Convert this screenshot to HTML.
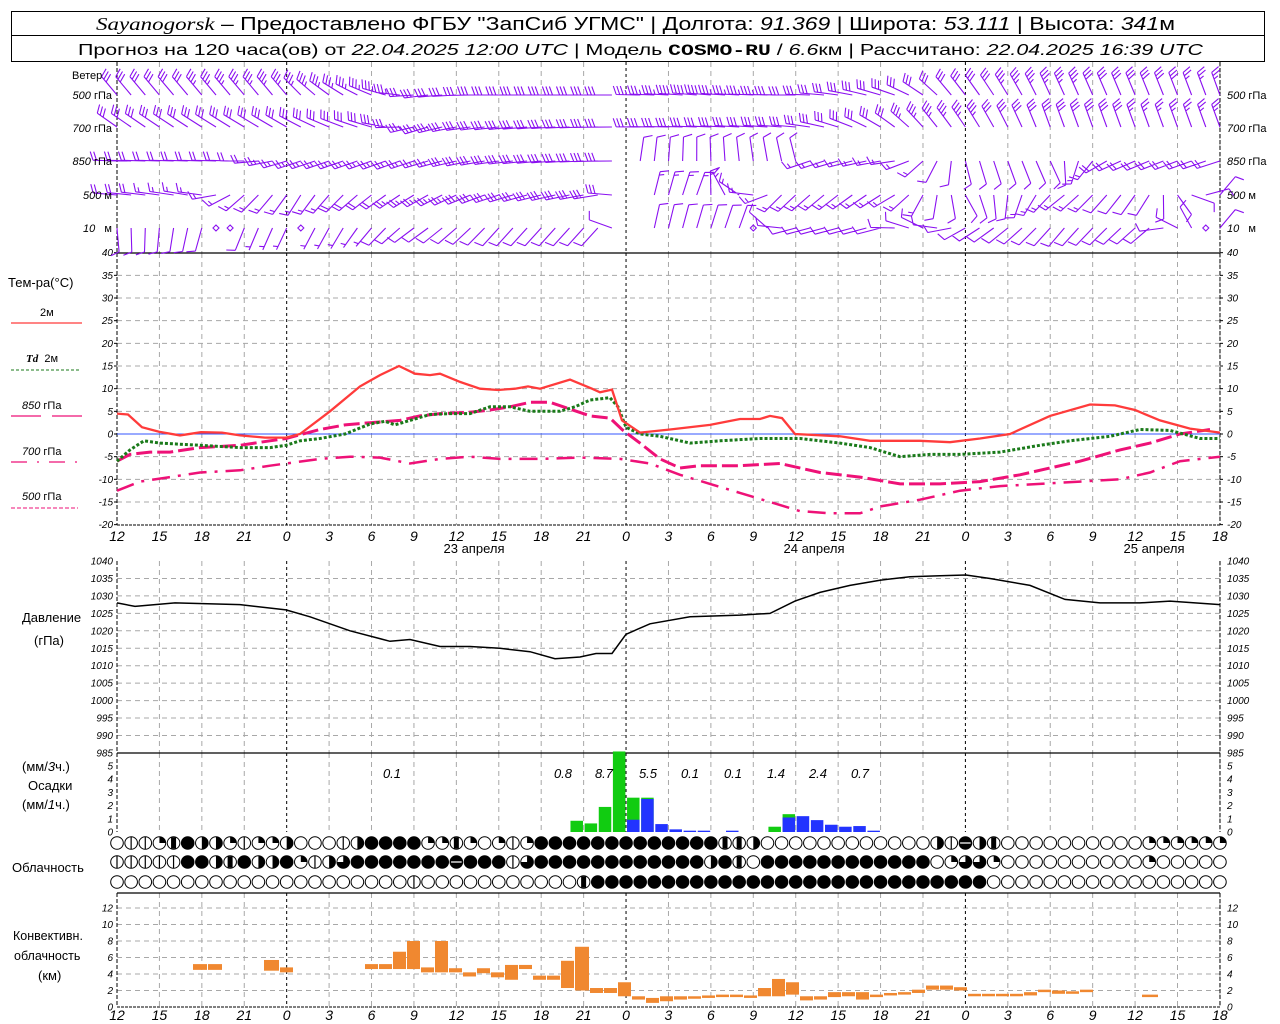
<!DOCTYPE html>
<html><head><meta charset="utf-8">
<style>
html,body{margin:0;padding:0;background:#fff;}
svg{display:block;font-family:"Liberation Sans","DejaVu Sans",sans-serif;}
.t{font-size:11px;fill:#000;}
.n{font-size:10px;font-style:italic;fill:#000;}
</style></head>
<body>
<svg id="s" width="1280" height="1024" viewBox="0 0 1280 1024" xmlns="http://www.w3.org/2000/svg">
<rect x="0" y="0" width="1280" height="1024" fill="#fff"/>
<rect x="11.5" y="11.5" width="1253" height="24" fill="none" stroke="#000"/>
<rect x="11.5" y="35.5" width="1253" height="26" fill="none" stroke="#000"/>
<text x="96" y="30" font-size="18" textLength="1079" lengthAdjust="spacingAndGlyphs"><tspan font-family="Liberation Serif" font-style="italic">Sayanogorsk</tspan> – Предоставлено ФГБУ "ЗапСиб УГМС" | Долгота: <tspan font-style="italic">91.369</tspan> | Широта: <tspan font-style="italic">53.111</tspan> | Высота: <tspan font-style="italic">341</tspan>м</text>
<text x="78" y="55" font-size="16" textLength="1125" lengthAdjust="spacingAndGlyphs">Прогноз на 120 часа(ов) от <tspan font-style="italic">22.04.2025 12:00 UTC</tspan> | Модель <tspan font-family="Liberation Mono" font-weight="bold">COSMO-RU</tspan> / <tspan font-style="italic">6.6</tspan>км | Рассчитано: <tspan font-style="italic">22.04.2025 16:39 UTC</tspan></text>
<g id="g"></g>
<!-- left labels -->
<text class="t" x="72" y="79">Ветер</text>
<text class="t" x="112" y="99" text-anchor="end"><tspan font-style="italic">500</tspan> гПа</text>
<text class="t" x="112" y="132" text-anchor="end"><tspan font-style="italic">700</tspan> гПа</text>
<text class="t" x="112" y="165" text-anchor="end"><tspan font-style="italic">850</tspan> гПа</text>
<text class="t" x="112" y="199" text-anchor="end"><tspan font-style="italic">500</tspan> м</text>
<text class="t" x="112" y="232" text-anchor="end"><tspan font-style="italic">10</tspan>&#160;&#160;&#160;м</text>
<text class="t" x="1227" y="99"><tspan font-style="italic">500</tspan> гПа</text>
<text class="t" x="1227" y="132"><tspan font-style="italic">700</tspan> гПа</text>
<text class="t" x="1227" y="165"><tspan font-style="italic">850</tspan> гПа</text>
<text class="t" x="1227" y="199"><tspan font-style="italic">500</tspan> м</text>
<text class="t" x="1227" y="232"><tspan font-style="italic">10</tspan>&#160;&#160;&#160;м</text>

<text x="8" y="287" font-size="13">Тем-ра(°C)</text>
<text class="t" x="40" y="316">2м</text>
<line x1="11" y1="323" x2="82" y2="323" stroke="#ff3b3b" stroke-width="1.2"/>
<text class="t" x="26" y="362"><tspan font-style="italic" font-weight="bold" font-family="Liberation Serif">Td</tspan>&#160;&#160;2м</text>
<line x1="11" y1="370" x2="79" y2="370" stroke="#1a7a1a" stroke-width="1" stroke-dasharray="3,2"/>
<text class="t" x="22" y="409"><tspan font-style="italic">850</tspan> гПа</text>
<line x1="11" y1="416" x2="82" y2="416" stroke="#ee1177" stroke-width="1.2" stroke-dasharray="30,11"/>
<text class="t" x="22" y="455"><tspan font-style="italic">700</tspan> гПа</text>
<line x1="11" y1="462" x2="78" y2="462" stroke="#ee1177" stroke-width="1.2" stroke-dasharray="16,10,2,10"/>
<text class="t" x="22" y="500"><tspan font-style="italic">500</tspan> гПа</text>
<line x1="11" y1="508" x2="78" y2="508" stroke="#ee1177" stroke-width="1" stroke-dasharray="4,2"/>

<text x="22" y="622" font-size="13">Давление</text>
<text x="34" y="645" font-size="13">(гПа)</text>
<text x="22" y="771" font-size="13">(мм/<tspan font-style="italic">3</tspan>ч.)</text>
<text x="28" y="790" font-size="13">Осадки</text>
<text x="22" y="809" font-size="13">(мм/<tspan font-style="italic">1</tspan>ч.)</text>
<text x="12" y="872" font-size="13">Облачность</text>
<text x="13" y="940" font-size="12.5">Конвективн.</text>
<text x="14" y="960" font-size="12.5">облачность</text>
<text x="38" y="980" font-size="13">(км)</text>
</svg>
<script>
(function(){
var NS="http://www.w3.org/2000/svg";
var g=document.getElementById("g");
function el(tag,attrs,txt){var e=document.createElementNS(NS,tag);for(var k in attrs)e.setAttribute(k,attrs[k]);if(txt!=null)e.textContent=txt;g.appendChild(e);return e;}
function X(h){return 117+h*14.14;}
var L=117,R=1220;
// horizontal grids
function hgrid(y){el("line",{x1:L,y1:y,x2:R,y2:y,stroke:"#a8a8a8","stroke-dasharray":"5,4","stroke-width":1});}
function TY(t){return 434-t*4.533;}
function PY(p){return 561+(1040-p)*3.49;}
function RY(v){return 832-v*13.2;}
function KY(k){return 1007-k*8.25;}
for(var t=35;t>=-15;t-=5){hgrid(TY(t));}
for(var p=1035;p>=990;p-=5){hgrid(PY(p));}
for(var k=2;k<=12;k+=2){hgrid(KY(k));}
// vertical grid
var segs=[[62,253],[253,525],[561,753],[753,832],[893,1007]];
for(var i=0;i<=26;i++){var x=X(3*i);var day=((3*i-12)%24===0);
 if(i===0)continue;
 segs.forEach(function(s){el("line",{x1:x,y1:s[0],x2:x,y2:s[1],stroke:day?"#000":"#a8a8a8","stroke-dasharray":day?"3,3":"5,4","stroke-width":1});});}
// axes
[[L,253,L,525],[R,253,R,525],[L,561,L,832],[R,561,R,832],[L,893,L,1007],[R,893,R,1007],[L,62,L,253],[R,62,R,253]].forEach(function(a){el("line",{x1:a[0],y1:a[1],x2:a[2],y2:a[3],stroke:"#000","stroke-width":1,"stroke-dasharray":"4,2"});});
[253,753,893].forEach(function(y){el("line",{x1:L,y1:y,x2:R,y2:y,stroke:"#000","stroke-width":1.3});});
[525,1007].forEach(function(y){el("line",{x1:L,y1:y,x2:R,y2:y,stroke:"#000","stroke-width":1,"stroke-dasharray":"3,1"});});
// axis labels
function lab(x,y,s,anchor){el("text",{x:x,y:y+3.5,"class":"n","text-anchor":anchor},s);}
for(var t=40;t>=-20;t-=5){lab(113,TY(t),""+t,"end");lab(1227,TY(t),""+t,"start");el("line",{x1:L-3,y1:TY(t),x2:L,y2:TY(t),stroke:"#000"});el("line",{x1:R,y1:TY(t),x2:R+3,y2:TY(t),stroke:"#000"});}
for(var p=1040;p>=985;p-=5){lab(113,PY(p),""+p,"end");lab(1227,PY(p),""+p,"start");}
for(var v=0;v<=5;v++){lab(113,RY(v),""+v,"end");lab(1227,RY(v),""+v,"start");}
for(var k=0;k<=12;k+=2){lab(113,KY(k),""+k,"end");lab(1227,KY(k),""+k,"start");}
// hour labels
for(var i=0;i<=26;i++){var s=""+((12+3*i)%24);
 el("text",{x:X(3*i),y:541,"text-anchor":"middle","font-size":14,"font-style":"italic"},s);
 el("text",{x:X(3*i),y:1020,"text-anchor":"middle","font-size":14,"font-style":"italic"},s);}
el("text",{x:474,y:553,"text-anchor":"middle","font-size":13},"23  апреля");
el("text",{x:814,y:553,"text-anchor":"middle","font-size":13},"24  апреля");
el("text",{x:1154,y:553,"text-anchor":"middle","font-size":13},"25  апреля");
// zero line
el("line",{x1:L,y1:TY(0),x2:R,y2:TY(0),stroke:"#3355ff","stroke-width":1});
function poly(pts,fy,attrs){var d=pts.map(function(p,i){return (i?"L":"M")+p[0]+","+fy(p[1]).toFixed(1);}).join("");attrs.d=d;attrs.fill="none";el("path",attrs);}
var T2=[[117,4.5],[128,4.3],[142,1.5],[159,0.5],[180,-0.3],[201,0.4],[222,0.3],[240,-0.3],[265,-0.8],[286,-0.8],[300,0],[330,5],[360,10.5],[380,13],[399,15],[415,13.3],[430,13],[440,13.3],[460,11.5],[480,10],[498,9.7],[515,10],[528,10.5],[540,10],[570,12],[592,10],[600,9.2],[612,9.8],[622,3],[640,0.3],[670,1],[710,2],[740,3.3],[760,3.3],[770,4],[782,3.5],[795,0],[840,-0.5],[870,-1.5],[920,-1.5],[950,-1.8],[980,-1],[1010,0],[1050,4],[1090,6.5],[1115,6.3],[1135,5.3],[1160,3],[1190,1.2],[1220,0.3]];
var TD=[[117,-6],[130,-3.5],[144,-1.5],[160,-2],[200,-2.5],[240,-3],[270,-3],[286,-2.5],[300,-1.5],[320,-1],[345,0],[370,2.2],[385,2.8],[395,2],[410,3],[430,4.3],[450,4.5],[470,4.5],[490,6],[510,6],[530,5],[560,5],[575,6],[590,7.5],[610,8],[618,6],[626,1.5],[640,0],[660,-0.5],[690,-2],[720,-1.5],[760,-1],[800,-1],[840,-2],[870,-3],[900,-5],[930,-4.5],[960,-4.5],[1000,-4],[1040,-2.5],[1070,-1.5],[1110,-0.5],[1140,1],[1170,0.8],[1200,-1],[1220,-1]];
var T85=[[117,-6],[130,-4.5],[150,-4],[170,-4],[200,-3],[240,-2.5],[270,-1.5],[286,-1],[320,1],[345,2],[370,2.5],[400,3],[420,4],[440,4.5],[470,4.8],[490,5.3],[510,6],[530,7],[550,7],[570,5.5],[590,4],[610,3.5],[622,1],[640,-2],[660,-5.5],[680,-7.5],[700,-7],[740,-7],[780,-6.5],[820,-8.5],[860,-9.5],[900,-11],[940,-11],[980,-10.5],[1020,-9],[1050,-7.5],[1080,-6],[1120,-3.5],[1150,-2],[1180,0],[1210,1]];
var T70=[[117,-12.5],[140,-10.5],[170,-9.5],[200,-8.5],[240,-8],[270,-7],[286,-6.5],[320,-5.5],[350,-5],[380,-5.2],[410,-6.5],[440,-5.5],[470,-5],[500,-5.5],[540,-5.5],[580,-5.2],[620,-5.5],[650,-6.5],[680,-9],[710,-11],[740,-13],[770,-15],[800,-17],[830,-17.5],[860,-17.5],[880,-16],[920,-14.5],[960,-12.5],[1000,-11.5],[1040,-11],[1080,-10.5],[1120,-10],[1150,-8.5],[1180,-6],[1220,-5]];
poly(T70,TY,{stroke:"#ee1177","stroke-width":2.5,"stroke-dasharray":"18,8,3,8"});
poly(T85,TY,{stroke:"#ee1177","stroke-width":3,"stroke-dasharray":"16,5"});
poly(TD,TY,{stroke:"#1a7a1a","stroke-width":3,"stroke-dasharray":"3,2"});
poly(T2,TY,{stroke:"#ff3b3b","stroke-width":2.3});
var PR=[[117,1028],[135,1027],[175,1028],[240,1027.5],[286,1026],[310,1024],[350,1020],[390,1017],[410,1017.5],[440,1015.5],[470,1015.5],[500,1015],[530,1014],[555,1012],[580,1012.5],[596,1013.5],[612,1013.5],[626,1019],[650,1022],[690,1024],[740,1024.5],[770,1025],[795,1028.5],[820,1031],[850,1033],[880,1034.5],[910,1035.5],[940,1035.8],[966,1036],[990,1035],[1030,1033],[1065,1029],[1100,1028],[1140,1028],[1170,1028.5],[1220,1027.5]];
poly(PR,PY,{stroke:"#000","stroke-width":1.5});
// precipitation
var pg=[[32,0.85],[33,0.65],[34,1.9],[35,6.1],[36,2.6],[37,2.6],[46,0.4],[47,1.35]];
var pb=[[36,0.93],[37,2.5],[38,0.6],[39,0.2],[40,0.1],[41,0.1],[43,0.1],[47,1.1],[48,1.2],[49,0.9],[50,0.55],[51,0.4],[52,0.45],[53,0.1]];
pg.forEach(function(b){var y=RY(b[1]);el("rect",{x:X(b[0])+1,y:y,width:12.5,height:832-y,fill:"#11cc11"});});
pb.forEach(function(b){var y=RY(b[1]);el("rect",{x:X(b[0])+1,y:y,width:12.5,height:832-y,fill:"#2233ff"});});
[[392,"0.1"],[563,"0.8"],[604,"8.7"],[648,"5.5"],[690,"0.1"],[733,"0.1"],[776,"1.4"],[818,"2.4"],[860,"0.7"]].forEach(function(a){el("text",{x:a[0],y:778,"text-anchor":"middle","font-size":13,"font-style":"italic"},a[1]);});
// clouds
var rows=[
"011qmfhhq1qqh0001hffffqqmq0q1qfffffffff"+"ffffmmh000000000000h1ehm0000000000qqqqqq",
"11111ffhmfhhfq1htfffffffefff1tfffffffff"+"fffhfm0ffffffffffff0qttq0000000000q00000",
"000000000000000000000100000000000mffffff"+"ffffffffffffffffffffff000000000000000000"];
var ys=[843,862,882],r=6.3;
var dark="";var lines="";var white="";
rows.forEach(function(row,ri){var cy=ys[ri];
 for(var h=0;h<=78;h++){var c=row.charAt(h)||"0";var cx=X(h);
  el("circle",{cx:cx,cy:cy,r:r,fill:"#fff",stroke:"#000","stroke-width":1});
  if(c==="1")lines+="M"+cx+","+(cy-r)+"V"+(cy+r);
  else if(c==="q")dark+="M"+cx+","+cy+"L"+cx+","+(cy-r)+"A"+r+","+r+" 0 0 1 "+(cx+r)+","+cy+"Z";
  else if(c==="h")dark+="M"+cx+","+(cy-r)+"A"+r+","+r+" 0 0 1 "+cx+","+(cy+r)+"Z";
  else if(c==="m")dark+="M"+(cx-2.5)+","+(cy-5.8)+"h5v11.6h-5Z";
  else if(c==="t")dark+="M"+cx+","+cy+"L"+cx+","+(cy-r)+"A"+r+","+r+" 0 1 1 "+(cx-r)+","+cy+"Z";
  else if(c==="f"||c==="e"){dark+="M"+(cx-r)+","+cy+"A"+r+","+r+" 0 1 1 "+(cx+r)+","+cy+"A"+r+","+r+" 0 1 1 "+(cx-r)+","+cy+"Z";if(c==="e")white+="M"+(cx-r+1)+","+cy+"H"+(cx+r-1);}
 }});
el("path",{d:dark,fill:"#000"});el("path",{d:lines,stroke:"#000","stroke-width":1.2,fill:"none"});el("path",{d:white,stroke:"#fff","stroke-width":1.2,fill:"none"});
// convective
var cv=[[193,207,4.5,5.2],[208,222,4.5,5.2],[264,279,4.4,5.7],[280,293,4.2,4.8],[365,378,4.6,5.2],[379,392,4.6,5.2],[393,406,4.6,6.7],[407,420,4.6,8],[421,434,4.2,4.8],[435,448,4.2,8],[449,462,4.2,4.7],[463,476,3.7,4.2],[477,490,4.1,4.7],[491,504,3.6,4.2],[505,518,3.3,5.1],[519,532,4.6,5.1],[533,546,3.3,3.8],[547,560,3.3,3.8],[561,574,2.3,5.6],[575,589,2,7.3],[590,603,1.7,2.3],[604,617,1.7,2.3],[618,631,1.3,3],[632,645,0.9,1.3],[646,659,0.5,1.1],[660,673,0.7,1.3],[674,687,0.9,1.3],[688,701,1,1.3],[702,715,1.1,1.4],[716,729,1.2,1.5],[730,743,1.2,1.5],[744,757,1.1,1.4],[758,771,1.3,2.3],[772,785,1.3,3.4],[786,799,1.5,3],[800,813,0.8,1.3],[814,827,0.9,1.3],[828,841,1.2,1.8],[842,855,1.3,1.8],[856,869,0.9,1.8],[870,883,1.2,1.5],[884,897,1.4,1.7],[898,911,1.5,1.8],[912,925,1.7,2.1],[926,939,2.1,2.6],[940,953,2.1,2.6],[954,967,2,2.4],[968,981,1.3,1.6],[982,995,1.3,1.6],[996,1009,1.3,1.6],[1010,1023,1.3,1.6],[1024,1037,1.4,1.8],[1038,1051,1.8,2.1],[1052,1065,1.6,2],[1066,1079,1.6,1.9],[1080,1093,1.8,2.1],[1142,1158,1.2,1.5]];
cv.forEach(function(b){var y1=KY(b[3]),y2=KY(b[2]);el("rect",{x:b[0],y:y1,width:b[1]-b[0],height:Math.max(2,y2-y1),fill:"#f08830"});});
// wind barbs
var lev=[
 [95,[[117,320,3],[286,320,3.5],[380,290,3.5],[420,262,3],[480,270,3],[620,270,3],[700,275,4],[800,270,3],[900,290,3],[950,320,3],[1050,335,3.5],[1220,340,2.5]]],
 [127,[[117,305,3],[286,300,3],[380,285,3],[420,252,3.5],[470,262,3],[620,270,3],[800,275,3],[880,300,3],[930,320,3.5],[1050,340,3],[1220,340,2.5]]],
 [161,[[117,272,2],[240,272,2],[290,252,2.5],[400,250,2.5],[500,262,3],[620,270,3],[630,10,1],[800,345,1],[810,250,1.5],[900,262,1.5],[966,165,1],[1050,155,1],[1110,245,2],[1220,252,2]]],
 [195,[[117,275,2],[200,280,1.5],[240,230,1.5],[300,212,1.5],[360,230,2],[500,252,3],[610,262,3],[626,10,1.5],[700,20,1.5],[780,225,1.5],[900,240,1.5],[966,150,1],[1060,232,1.5],[1150,212,1],[1220,40,1]]],
 [228,[[117,175,1],[220,200,1],[286,205,0.5],[340,210,0.5],[420,235,1],[500,222,1],[600,222,1],[626,10,1],[740,20,1],[790,255,1],[880,255,1],[920,300,1],[966,240,1],[1060,220,1],[1150,230,1],[1220,40,1]]]];
function interp(k,x){for(var i=0;i<k.length-1;i++){if(x<=k[i+1][0]){var a=k[i],b=k[i+1];var f=(x-a[0])/(b[0]-a[0]);var d=b[1]-a[1];if(d>180)d-=360;if(d<-180)d+=360;return [a[1]+d*f,a[2]+(b[2]-a[2])*f];}}var l=k[k.length-1];return [l[1],l[2]];}
var wd="";
var calm={4:[7,8,13,45,77]};
lev.forEach(function(lv,li){var y=lv[0];
 for(var h=0;h<=78;h++){if(h===36||h===37&&li>=3)continue;
  var x=X(h);
  if(calm[li]&&calm[li].indexOf(h)>=0){wd+="M"+x+","+(y-3)+"l3,3l-3,3l-3,-3Z";continue;}
  var v=interp(lv[1],x);var dir=v[0]*Math.PI/180;var sp=Math.round(v[1]*2)/2;
  var Ls=24,ux=Math.sin(dir),uy=-Math.cos(dir);
  var ex=x+ux*Ls,ey=y+uy*Ls;
  wd+="M"+x.toFixed(1)+","+y.toFixed(1)+"L"+ex.toFixed(1)+","+ey.toFixed(1);
  var fx=-uy,fy=ux;var n=Math.floor(sp),half=sp-n>0.1;
  for(var j=0;j<n;j++){var sx=ex-ux*j*3.5,sy=ey-uy*j*3.5;wd+="M"+sx.toFixed(1)+","+sy.toFixed(1)+"l"+((fx*0.94+ux*0.34)*9).toFixed(1)+","+((fy*0.94+uy*0.34)*9).toFixed(1);}
  if(half){var sx=ex-ux*n*3.5,sy=ey-uy*n*3.5;if(n===0){sx=ex-ux*3.5;sy=ey-uy*3.5;}wd+="M"+sx.toFixed(1)+","+sy.toFixed(1)+"l"+((fx*0.94+ux*0.34)*5).toFixed(1)+","+((fy*0.94+uy*0.34)*5).toFixed(1);}
 }});
el("path",{d:wd,stroke:"#8a10f0","stroke-width":1.1,fill:"none"});
})();
</script>
</body></html>
